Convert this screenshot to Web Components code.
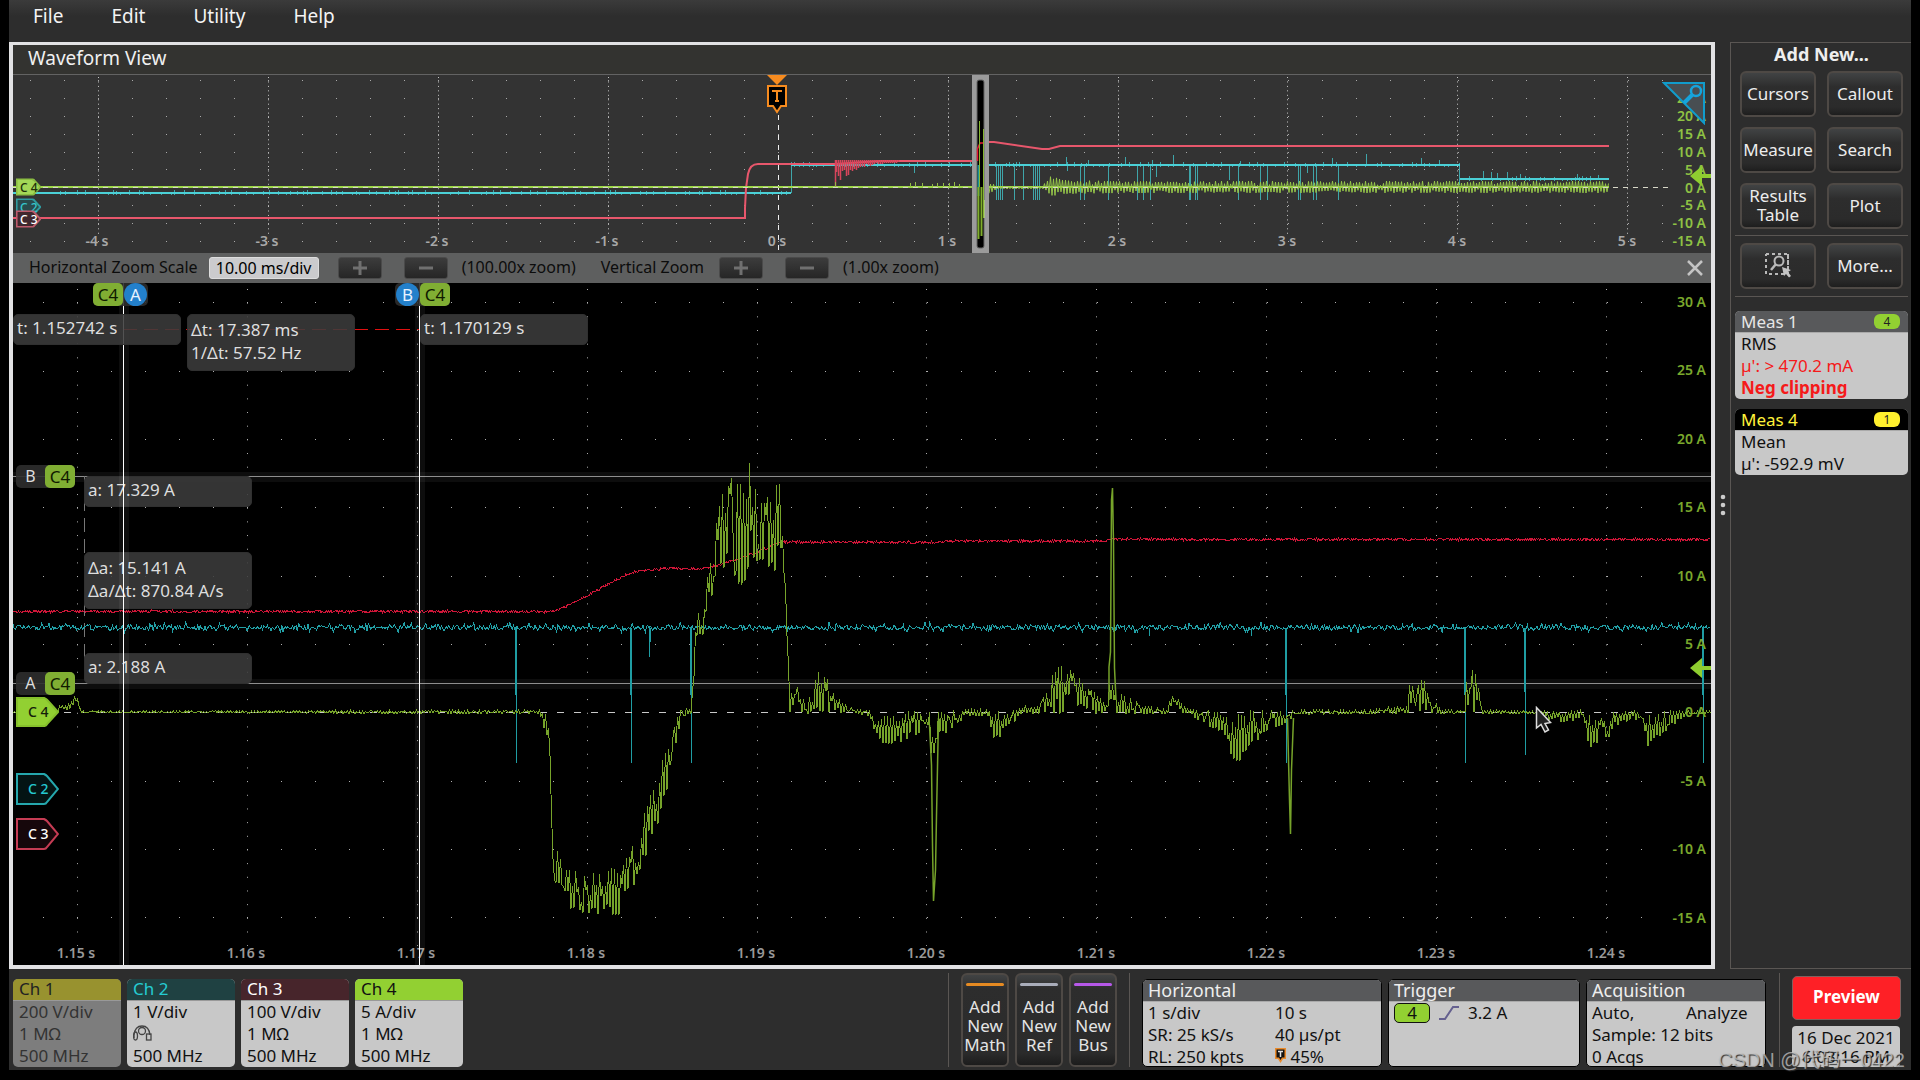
<!DOCTYPE html>
<html lang="en">
<head>
<meta charset="utf-8">
<title>Waveform View</title>
<style>
html,body{margin:0;height:100%;background:#000}
body{font-family:"Noto Sans","Open Sans",sans-serif;color:#e8e8e8;overflow:hidden}
</style>
</head>
<body>
<scope-app></scope-app>
<script>
function element(name, css, html, init) {
  const tpl = document.createElement('template');
  tpl.innerHTML = `<style>:host,*{box-sizing:border-box}${css}</style>${html}`;
  customElements.define(name, class extends HTMLElement {
    connectedCallback() {
      if (this.shadowRoot) return;
      const root = this.attachShadow({ mode: 'open' });
      root.append(tpl.content.cloneNode(true));
      if (init) init.call(this, root);
    }
  });
}

/* deterministic noise, so the traces look the same on every load */
function noise(seed) {
  let s = seed;
  return () => ((s = (s * 1103515245 + 12345) % 2147483648) / 2147483648);
}
/* zig-zag between a low and a high envelope: rows are [x, high, low] */
function envelope(rows, step, seed, depth) {
  const r = noise(seed);
  let d = '', up = false, k = 0;
  for (let x = rows[0][0]; x <= rows[rows.length - 1][0]; x += step) {
    while (rows[k + 1] && rows[k + 1][0] < x) k++;
    const a = rows[k], b = rows[k + 1] || a, t = b[0] > a[0] ? (x - a[0]) / (b[0] - a[0]) : 0;
    const hi = a[1] + (b[1] - a[1]) * t, lo = a[2] + (b[2] - a[2]) * t;
    const f = r() * r() * depth;
    const y = up ? hi + (lo - hi) * f : lo - (lo - hi) * f;
    d += (d ? 'L' : 'M') + x.toFixed(1) + ' ' + y.toFixed(1);
    up = !up;
  }
  return d;
}
function band(points, h) { return points.map(p => [p[0], p[1] - h, p[1] + h]); }
/* put plot annotations on the plot's own coordinate system */
function place(root, x0, y0, w, h) {
  root.querySelectorAll('[data-x]').forEach(e => e.style.left = ((e.dataset.x - x0) / w * 100) + '%');
  root.querySelectorAll('[data-y]').forEach(e => e.style.top = ((e.dataset.y - y0) / h * 100) + '%');
}

element('menu-bar', `
:host{display:block;height:42px;background:linear-gradient(#3b3b3b,#2d2d2d 16px)}
nav{display:flex;gap:48px;padding:2px 24px}
button{font-family:inherit;font-size:19px;line-height:28px;color:#f4f4f4;background:none;border:0;padding:0}`,
`<nav><button>File</button><button>Edit</button><button>Utility</button><button>Help</button></nav>`);

element('channel-tag', `
:host{display:block;position:absolute;width:var(--w,43px);height:var(--h,32px);transform:translateY(-50%)}
svg{position:absolute;inset:0;width:100%;height:100%}
path{fill:var(--fill);stroke:var(--line);stroke-width:2;vector-effect:non-scaling-stroke}
span{position:absolute;inset:0;padding-left:var(--pad,12px);display:flex;align-items:center;font-size:var(--fs,14px);font-weight:500;line-height:16px;color:var(--ink);white-space:pre}`,
`<svg viewBox="0 0 43 32" preserveAspectRatio="none"><path d="M1 1H28Q30 2 31 3L42 16L31 29Q30 31 28 31H1Z"/></svg><span><slot></slot></span>`);

element('source-chip', `
:host{display:flex;align-items:center;position:absolute;height:23px;background:#2e2e2ee6;border-radius:5px;font-size:17px;line-height:23px;color:#ddd}
b{font-weight:400;width:30px;height:23px;text-align:center;background:#80ae33;color:#101a00;border-radius:5px}
i{font-style:normal;text-align:center;width:24px}
:host([round]) i{background:#2380cb;border-radius:50%;width:23px;color:#e8f2ff;margin:0 1px}
:host([before]){flex-direction:row-reverse}
:host([side]) i{width:29px;font-size:16px}`,
`<b>C4</b><i><slot></slot></i>`);

element('read-out', `
:host{display:block;position:absolute;width:168px;border-radius:5px;background:#3b3b3be0;border:1px solid #303030;color:#dedede;font-size:17px;line-height:23px;padding:1px 3px 5px;white-space:pre-line}
:host([two]){padding:3px 3px 6px}`,
`<slot></slot>`);

element('trigger-level', `
:host{display:block;position:absolute;right:0;width:21px;height:20px;transform:translateY(-50%)}
svg{display:block}`,
`<svg width="21" height="20"><path d="M0 10L12 0V8H21V12H12V20Z" fill="#8fce30"/></svg>`);

element('overview-plot', `
:host{display:block;position:relative;height:178px;background:#333;overflow:hidden}
.plot{position:absolute;inset:0;width:100%;height:100%}
.plot path{fill:none;vector-effect:non-scaling-stroke}
.t,.v{position:absolute;font-size:14px;line-height:16px;font-weight:600;color:#a8a8a8;white-space:nowrap}
.t{transform:translate(-50%,-50%)}
.v{right:5px;transform:translateY(-50%);color:#8fc244}
.over{position:absolute;top:0;transform:translateX(-50%)}
.corner{position:absolute;right:5px;top:6px}`,
`<svg class="plot" viewBox="13 75 1698 178" preserveAspectRatio="none"></svg>
<div class="labels"></div>
<svg class="over" data-x="777" width="22" height="40" viewBox="0 0 22 40"><path d="M1 0H21L11 10Z" fill="#f68b1f"/><path d="M2 11H20V31H15L11 37L7 31H2Z" fill="#000" stroke="#f68b1f" stroke-width="2"/><path d="M7 17V16H15V17M11 16V26M9 26H13" fill="none" stroke="#f68b1f" stroke-width="2"/></svg>
<svg class="corner" width="44" height="44" viewBox="0 0 44 44"><path d="M2 2H42V42Z" fill="#484e52" stroke="#119ccc" stroke-width="2"/><circle cx="34" cy="10" r="5" fill="none" stroke="#16a4dc" stroke-width="2.5"/><path d="M30 14L22 22" stroke="#16a4dc" stroke-width="4"/></svg>
<channel-tag data-x="16" data-y="187" style="--w:25px;--h:17px;--fill:#a3d757;--line:#8bbd42;--ink:#20300a;--pad:4px;--fs:12px">C 4</channel-tag>
<channel-tag data-x="16" data-y="207" style="--w:25px;--h:17px;--fill:#2a4a4c;--line:#2f9a9f;--ink:#35c6cc;--pad:4px;--fs:12px">C 2</channel-tag>
<channel-tag data-x="16" data-y="219" style="--w:25px;--h:17px;--fill:#40282e;--line:#bd5a6c;--ink:#fff;--pad:4px;--fs:12px">C 3</channel-tag>
<trigger-level data-y="175.5"></trigger-level>`,
function (root) {
  const p = (d, c, w, x = '') => `<path d="${d}" stroke="${c}" stroke-width="${w}" ${x}/>`;
  let s = '';
  for (const y of [80, 98, 116, 134, 152, 169, 205, 223, 241]) s += p(`M30 ${y}.5H1690`, '#aaa', 1, 'stroke-dasharray="1 33"');
  for (const x of [98, 268, 438, 608, 948, 1118, 1287, 1457, 1627]) s += p(`M${x}.5 77V235`, '#c8c8c8', 1, 'stroke-dasharray="1 3.45"');
  s += p('M778.5 115V250', '#eee', 1, 'stroke-dasharray="5 5"');
  const r = noise(7);
  /* channel 2 */
  let d = '';
  for (const x of [996, 998, 1000, 1002, 1014, 1023, 1033, 1035, 1037, 1039, 1080, 1084, 1108, 1137, 1143, 1150, 1189, 1190, 1195, 1197, 1238, 1260, 1267, 1298, 1300, 1313, 1316, 1338]) d += `M${x}.5 165V200`;
  d += 'M914.5 165V173M1067.5 165V171M1156.5 165V177M1229.5 165V180M1307.5 165V173';
  for (const [x, y] of [[1066,157],[1088,160],[1125,157],[1152,160],[1173,155],[1240,161],[1332,158],[1366,154],[1421,158],[1439,160],[1483,171],[1491,172],[1497,173],[1507,172],[1520,174],[1577,174],[1598,175]]) d += `M${x}.5 ${y}V${y > 165 ? 179 : 165}`;
  s += p(d, '#3fa5a9', 1);
  s += p('M791.5 193V165M1459.5 165V185', '#3fa5a9', 1);
  d = '';
  for (let x = 60; x < 1600; x += 3 + r() * 9) {
    const y = x < 791 ? 193 : x < 1460 ? 165 : 179;
    d += `M${x | 0}.5 ${y - r() * 3 | 0}V${y + 2}`;
  }
  s += p(d, '#3fa5a9', 1);
  s += p('M13 193H791M791 165H1460M1460 179H1609', '#4bd0d6', 2);
  /* channel 3 */
  s += p('M13 218H745V208L746 188L748 174Q750 164 758 164H835L880 161H976M984 142H994L1042 149H1049L1060 146H1080L1110 146H1609', '#e8576c', 2);
  d = 'M835.5 160V186';
  for (let x = 836, a = 24; x < 900; x += 2, a *= .9) d += `M${x}.5 160V${(162 + a * (.4 + .6 * r())).toFixed(0)}`;
  s += p(d, '#d8455c', 1.5);
  /* channel 4 */
  s += p('M13 187H1609', '#9fd84a', 2);
  d = 'M835.5 187V182';
  for (const x of [910, 915, 922, 932, 937, 943, 949, 954, 959]) d += `M${x}.5 187V${182 + (x % 3)}`;
  s += p(d, '#93bd45', 1);
  s += p(envelope([[989, 180, 194], [997, 186, 189], [1042, 186, 189], [1045, 182, 191], [1051, 176, 196], [1064, 180, 194], [1120, 181, 193], [1609, 181, 193]], 1.5, 3, .4), '#98c94a', 1);
  s += p('M13 187.5H1672', '#d8d8c8', 1, 'stroke-dasharray="5 5"');
  s += `<rect x="972" y="75" width="17" height="178" fill="#9b9b9b"/><rect x="977" y="80" width="7" height="168" rx="2" fill="#000" stroke="#666"/>`;
  s += p('M977.5 161V149L980 143H984', '#e21b35', 1.5) + p('M978.5 165V196', '#1c8f94', 2);
  s += p('M978.5 187V239M981.5 187V236', '#7fae2b', 2) + p('M979.5 121V187M983.5 129V218', '#86b832', 1) + p('M984.5 200V218', '#a8c080', 1);
  root.querySelector('.plot').innerHTML = s;
  let l = '';
  [-4, -3, -2, -1, 0, 1, 2, 3, 4, 5].forEach(n => l += `<span class="t" data-x="${777 + n * 170}" data-y="241">${n} s</span>`);
  [25, 20, 15, 10, 5, 0, -5, -10, -15].forEach((n, i) => l += `<span class="v" data-y="${98 + i * 17.9}">${n} A</span>`);
  root.querySelector('.labels').innerHTML = l;
  place(root, 13, 75, 1698, 178);
});

element('zoom-bar', `
:host{display:flex;align-items:center;height:30px;background:#5e5f5f;color:#0c0c0c;font-size:16px;line-height:22px;padding:0 8px 0 16px;white-space:nowrap}
label,span{display:block;padding-bottom:3px}
input{font:inherit;width:110px;height:22px;margin:0 19px 0 11px;padding:0 0 1px;text-align:center;background:#cbcbcd;border:1px solid #ddd;border-radius:3px;color:#000}
button{display:grid;place-items:center;width:44px;height:22px;padding:0;border:1px solid #4a4a4a;border-radius:3px;background:linear-gradient(#3c3c3c,#262626)}
.m{margin:0 14px 0 22px}
.v{margin:0 15px 0 25px}
.x{margin-left:auto;background:none;border:0;width:16px;height:20px}`,
`<label for="hs">Horizontal Zoom Scale</label><input id="hs" value="10.00 ms/div">
<button aria-label="Zoom in horizontally"><svg width="16" height="16"><path d="M8 1V15M1 8H15" stroke="#707070" stroke-width="3"/></svg></button>
<button class="m" aria-label="Zoom out horizontally"><svg width="16" height="16"><path d="M1 8H15" stroke="#707070" stroke-width="3"/></svg></button>
<span>(100.00x zoom)</span><span class="v">Vertical Zoom</span>
<button aria-label="Zoom in vertically"><svg width="16" height="16"><path d="M8 1V15M1 8H15" stroke="#707070" stroke-width="3"/></svg></button>
<button class="m" aria-label="Zoom out vertically"><svg width="16" height="16"><path d="M1 8H15" stroke="#707070" stroke-width="3"/></svg></button>
<span>(1.00x zoom)</span>
<button class="x" aria-label="Close zoom"><svg width="16" height="16"><path d="M1 1L15 15M15 1L1 15" stroke="#c4c4c4" stroke-width="2.5"/></svg></button>`);

element('zoom-plot', `
:host{display:block;position:relative;flex:1;min-height:300px;background:#000;overflow:hidden}
.plot{position:absolute;inset:0;width:100%;height:100%}
.plot path{fill:none;vector-effect:non-scaling-stroke}
.t,.v{position:absolute;font-size:14px;line-height:16px;font-weight:600;color:#999;white-space:nowrap}
.t{transform:translate(-50%,-50%)}
.v{right:5px;transform:translateY(-50%);color:#7aa82c}
.ptr{position:absolute}`,
`<svg class="plot base" viewBox="13 283 1698 682" preserveAspectRatio="none"></svg>
<div class="labels"></div>
<read-out data-x="84" data-y="476">a: 17.329 A</read-out>
<read-out two data-x="84" data-y="552">Δa: 15.141 A
Δa/Δt: 870.84 A/s</read-out>
<read-out data-x="84" data-y="653">a: 2.188 A</read-out>
<svg class="plot lines" viewBox="13 283 1698 682" preserveAspectRatio="none"></svg>
<read-out data-x="13" data-y="314">t: 1.152742 s</read-out>
<read-out two data-x="187" data-y="314">Δt: 17.387 ms
1/Δt: 57.52 Hz</read-out>
<read-out data-x="420" data-y="314">t: 1.170129 s</read-out>
<source-chip round data-x="93" data-y="283">A</source-chip>
<source-chip round before data-x="395" data-y="283">B</source-chip>
<source-chip side before data-x="16" data-y="465">B</source-chip>
<source-chip side before data-x="16" data-y="672">A</source-chip>
<channel-tag data-x="16" data-y="712" style="--h:30px;--fill:#92d032;--line:#86c02c;--ink:#14200a">C 4</channel-tag>
<channel-tag data-x="16" data-y="789" style="--fill:#041414;--line:#25a7ad;--ink:#25c8cf">C 2</channel-tag>
<channel-tag data-x="16" data-y="834" style="--fill:#16070b;--line:#c63c54;--ink:#fff">C 3</channel-tag>
<trigger-level data-y="668"></trigger-level>
<svg class="ptr" data-x="1535" data-y="706" width="18" height="28"><path d="M1.500 1.500V22L6 18.500L10 26L13.500 24L10 17.500L15.500 16.500Z" fill="#222" stroke="#ddd" stroke-width="1.500"/></svg>`,
function (root) {
  const p = (d, c, w, x = '') => `<path d="${d}" stroke="${c}" stroke-width="${w}" ${x}/>`;
  const crisp = 'shape-rendering="crispEdges"';
  let s = '';
  for (const y of [302, 371, 439, 507, 576, 644, 781, 849, 917]) s += p(`M43 ${y}.5H1675`, '#b0b0b0', 1, 'stroke-dasharray="1 33"');
  for (const x of [77, 247, 417, 587, 757, 926, 1096, 1266, 1436, 1606]) s += p(`M${x}.5 289V946`, '#b0b0b0', 1, 'stroke-dasharray="1 12.67"');
  for (const y of [477, 684]) s += `<rect x="13" y="${y - 5}" width="1698" height="10" fill="#0d0d0d"/>`;
  for (const y of [476, 683]) s += p(`M13 ${y}.5H1711`, '#8e8e8e', 1);
  s += p('M84.500 476V683', '#777', 1, 'stroke-dasharray="14 7"');
  const red = [[13,611.5],[552,611.5],[560,609],[587,596],[610,583],[630,573],[640,571],[665,568.5],[700,568.5],[715,566],[735,560],[757,552],[775,544],[782,542],[935,542.5],[945,541],[1105,541],[1112,539],[1200,539.5],[1711,539.5]];
  s += p(envelope(band(red, 1.2), 1.1, 11, 1.2), '#cf1638', 1, crisp);
  s += p(envelope(band([[13, 627.5], [1711, 627.5]], 2), 1.2, 29, 2), '#22a0a6', 1, crisp);
  let d = '';
  for (const x of [516, 631, 691, 1286, 1465, 1703]) d += `M${x - 1}.5 628V695M${x}.5 628V763`;
  d += 'M1524.500 628V692M1525.500 628V755M649.500 628V657M650.500 628V642M1149.500 628V636M1251.500 628V636';
  s += p(d, '#1f9da3', 1);
  const g = [[13,711,713],[56,711,714],[58,706,713],[70,703,711],[74,696,704],[77,695,702],[80,708,713],[82,711,713],[540,710,714],[542,710,724],[547,711,735],[549,728,745],[550,740,760],[551,800,815],[553,840,860],[554,863,911],[556,858,895],[558,843,885],[562,865,885],[563,870,915],[566,866,915],[590,876,915],[595,862,915],[605,885,915],[610,862,915],[618,872,915],[622,868,914],[629,850,900],[636,827,886],[643,818,870],[650,795,852],[657,780,828],[663,758,810],[670,737,775],[676,720,745],[680,708,725],[686,707,714],[691,706,714],[693,680,700],[695,640,660],[697,605,640],[701,614,642],[704,610,632],[706,585,620],[709,560,606],[714,550,602],[717,515,583],[722,496,580],[729,464,575],[735,476,600],[740,470,585],[745,495,585],[749,455,570],[754,495,560],[759,465,570],[764,480,580],[767,448,585],[773,500,570],[779,465,580],[783,520,565],[785,556,585],[787,610,640],[789,682,705],[790,690,713],[800,686,713],[808,696,714],[813,686,714],[817,662,713],[822,675,713],[827,678,712],[835,693,713],[845,704,713],[855,710,714],[870,710,717],[874,710,732],[882,711,744],[898,710,746],[905,711,743],[915,710,738],[928,710,730],[930,712,735],[931,735,755],[936.5,735,755],[938,712,732],[946,711,734],[955,710,726],[968,710,717],[990,710,716],[992,711,743],[997,711,743],[1003,710,732],[1015,710,722],[1021,706,714],[1035,702,714],[1045,692,714],[1053,670,714],[1062,665,714],[1074,670,714],[1085,685,714],[1095,692,714],[1107,698,714],[1109,680,700],[1114,680,700],[1116,690,714],[1120,692,714],[1132,697,714],[1142,702,714],[1152,708,714],[1168,708,714],[1171,693,713],[1180,699,713],[1190,710,714],[1200,710,722],[1215,710,730],[1227,710,738],[1232,711,760],[1242,711,762],[1250,710,750],[1262,710,737],[1275,710,728],[1286,711,724],[1295,710,715],[1370,710,714],[1395,706,714],[1407,704,714],[1410,675,714],[1424,676,714],[1428,688,714],[1436,701,714],[1440,710,714],[1463,709,714],[1466,680,714],[1471,668,714],[1477,676,714],[1481,698,714],[1483,710,714],[1540,711,714],[1548,711,721],[1565,710,722],[1584,710,720],[1587,711,740],[1592,711,754],[1600,710,746],[1612,710,737],[1620,710,724],[1643,710,720],[1648,711,748],[1656,711,740],[1668,710,729],[1682,710,719],[1690,711,714],[1711,711,714]];
  s += p('M13 712.500H1675', '#c8c8c8', 1, 'stroke-dasharray="7 10"');
  s += p(envelope(g, 1.5, 5, .9), '#76a32a', 1, crisp);
  s += p('M929.500 725L931.500 765L932.500 845L933.500 901L935.500 870L936.500 816L938.500 718M1287.500 718L1289.500 800L1290.500 834L1291.500 770L1293.500 718M1109 700V667L1110.500 652L1111.500 500L1112.500 488L1113.500 543L1114.500 668L1116 700', '#76a32a', 1.5);
  s += p('M123 329.500H419', '#e01010', 1, 'stroke-dasharray="14 7"');
  root.querySelector('.base').innerHTML = s;
  root.querySelector('.lines').innerHTML =
    `<rect x="119" y="300" width="10" height="665" fill="#fff" fill-opacity=".05"/><rect x="415" y="300" width="10" height="665" fill="#fff" fill-opacity=".05"/>` +
    p('M123.500 283V965M419.500 283V965', '#fff', 1);
  let l = '';
  for (let i = 0; i < 10; i++) l += `<span class="t" data-x="${76 + i * 170}" data-y="953">${(1.15 + i / 100).toFixed(2)} s</span>`;
  [30, 25, 20, 15, 10, 5, 0, -5, -10, -15].forEach((n, i) => l += `<span class="v" data-y="${302 + i * 68.4}">${n} A</span>`);
  root.querySelector('.labels').innerHTML = l;
  place(root, 13, 283, 1698, 682);
});

element('wave-view', `
:host{display:flex;flex-direction:column;border:4px solid #e2e2e4;border-top-width:3px;min-width:0}
h1{margin:0;height:30px;padding-left:15px;font-size:19px;line-height:26px;font-weight:400;color:#f0f0f0;background:#333330;border-bottom:1px solid #636363}`,
`<h1>Waveform View</h1><overview-plot></overview-plot><zoom-bar></zoom-bar><zoom-plot></zoom-plot>`);

element('scope-button', `
:host{display:block}
button{display:flex;align-items:center;justify-content:center;width:100%;height:46px;padding:0 0 2px;font-family:inherit;font-size:17px;line-height:19px;color:#ececec;border:2px solid #4e4945;border-radius:6px;background:linear-gradient(#414344,#2d2d2d 14px,#2b2b2b 34px,#1e1e1e)}`,
`<button><slot></slot></button>`);

element('meas-badge', `
:host{display:block;border-radius:5px;overflow:hidden;background:#c8c8c8;color:#111;font-size:17px;line-height:22px}
header{display:flex;justify-content:space-between;align-items:center;height:22px;padding:0 8px 0 6px;background:var(--head,#58595b);color:var(--ink,#e6e6e6);border-bottom:1px solid #aaa}
b{width:26px;height:15px;border-radius:6px;background:var(--tag);color:#222;font-weight:400;font-size:12px;line-height:16px;text-align:center}
div{padding-left:6px}`,
`<header><span></span><b></b></header><div><slot></slot></div>`,
function (root) {
  root.querySelector('span').textContent = this.getAttribute('name');
  root.querySelector('b').textContent = this.getAttribute('source');
});

element('side-panel', `
:host{display:block;width:181px;border:1px solid #5a5653;border-right:0;padding:0 3px 0 4px}
h2{margin:0;font-size:18px;line-height:22px;font-weight:700;text-align:center;color:#eee}
.g{display:grid;grid-template-columns:76px 76px;justify-content:center;gap:10px 11px;padding:6px 0}
.h{padding:7px 0;border:solid #5a5653;border-width:1px 0}
meas-badge{margin-top:14px}
meas-badge+meas-badge{margin-top:10px}
p{margin:0}
.e{color:#f51a1a}`,
`<h2>Add New...</h2>
<div class="g"><scope-button>Cursors</scope-button><scope-button>Callout</scope-button><scope-button>Measure</scope-button><scope-button>Search</scope-button><scope-button>Results<br>Table</scope-button><scope-button>Plot</scope-button></div>
<div class="g h"><scope-button><svg width="28" height="26" viewBox="0 0 28 26"><path d="M2 2H24V20M24 2V22H2V2" fill="none" stroke="#b9b9b9" stroke-width="2" stroke-dasharray="3 3"/><circle cx="15" cy="9" r="4.500" fill="#2d2d2d" stroke="#b9b9b9" stroke-width="2"/><path d="M12 12L7 18" stroke="#b9b9b9" stroke-width="2.500"/><path d="M18 15L27 18L24 20L27 24L25 25.500L22 22L20 24Z" fill="#c4c4c4"/></svg></scope-button><scope-button>More...</scope-button></div>
<meas-badge name="Meas 1" source="4" style="--tag:#92d032"><p>RMS</p><p class="e">µ': &gt; 470.2 mA</p><p class="e"><strong>Neg clipping</strong></p></meas-badge>
<meas-badge name="Meas 4" source="1" style="--tag:#fff02e;--head:#000;--ink:#fff23a"><p>Mean</p><p>µ': -592.9 mV</p></meas-badge>`);

element('grip-dots', `:host{display:block;width:15px;padding-top:452px}svg{display:block;margin:0 auto}`,
`<svg width="6" height="24"><g fill="#ccc"><circle cx="3" cy="3" r="2.300"/><circle cx="3" cy="11" r="2.300"/><circle cx="3" cy="19" r="2.300"/></g></svg>`);

element('channel-badge', `
:host{display:block;width:108px;height:88px;border-radius:5px;overflow:hidden;background:#c8c8c8;color:#111;font-size:17px;line-height:22px}
:host([off]){background:#7d7d7d;color:#333}
header{height:22px;line-height:20px;padding-left:6px;background:var(--head);color:var(--ink);border-bottom:1px solid #999}
p{margin:0;padding-left:6px;height:22px}
svg{display:block}`,
`<header></header><p></p><p></p><p></p>`,
function (root) {
  root.querySelector('header').textContent = this.getAttribute('name');
  const p = root.querySelectorAll('p');
  p[0].textContent = this.getAttribute('scale');
  p[2].textContent = '500 MHz';
  if (this.hasAttribute('probe'))
    p[1].innerHTML = '<svg width="19" height="20" viewBox="0 0 19 20"><g fill="none" stroke="#444" stroke-width="1.300"><path d="M1 15V12Q2 3 9 3Q16 3 17 12"/><circle cx="9" cy="8" r="3.500"/><ellipse cx="2.500" cy="13" rx="2" ry="4"/><rect x="13.500" y="11" width="4.500" height="6"/></g></svg>';
  else p[1].textContent = '1 MΩ';
});

element('add-trace', `
:host{display:block}
button{width:48px;height:94px;padding:8px 0 0;font-family:inherit;font-size:17px;line-height:19px;color:#e4e4e4;border:2px solid #4e4945;border-radius:6px;background:linear-gradient(#414344,#2d2d2d 14px,#2b2b2b 78px,#1c1c1c);display:flex;flex-direction:column;align-items:center}
i{width:38px;height:3px;border-radius:2px;background:var(--bar);margin-bottom:11px}`,
`<button><i></i><span><slot></slot></span></button>`);

element('info-badge', `
:host{display:block;height:88px;border:1px solid #000;border-radius:5px;overflow:hidden;background:#c8c8c8;color:#111;font-size:17px;line-height:22px}
header{height:22px;line-height:20px;padding-left:5px;background:#58595b;color:#eee;font-size:18px;border-bottom:1px solid #aaa}
div{padding-left:5px}`,
`<header></header><div><slot></slot></div>`,
function (root) { root.querySelector('header').textContent = this.getAttribute('name'); });

element('settings-bar', `
:host{display:flex;padding:0 10px 3px 4px;height:101px;align-items:flex-end;white-space:nowrap}
.ch{display:flex;gap:6px;margin-right:auto}
.add{display:flex;gap:6px;height:94px;padding:0 12px;border:solid #5a5653;border-width:0 1px;margin-right:12px}
info-badge{margin-right:6px}
.r{display:flex;height:22px}
.r>span:first-child{width:127px}
.trg{display:flex;align-items:center;gap:9px}
.trg b{width:36px;height:20px;line-height:18px;border:1px solid #111;border-radius:5px;background:#92d032;text-align:center;font-weight:400}
.run{width:122px;margin-left:7px;border-left:1px solid #5a5653;height:94px;padding:3px 0 0 12px;display:flex;flex-direction:column;gap:6px}
.run button{width:109px;height:44px;padding:0 0 2px;background:#fe2026;color:#fff;border:1px solid #80605e;border-radius:5px;font:700 17px/20px "Noto Sans",sans-serif}
time{display:block;width:108px;height:42px;padding-top:2px;border-radius:4px;background:#c8c8c8;color:#111;text-align:center;font-size:17px;line-height:19px}`,
`<div class="ch">
<channel-badge off name="Ch 1" scale="200 V/div" style="--head:#98922f;--ink:#222"></channel-badge>
<channel-badge probe name="Ch 2" scale="1 V/div" style="--head:#1f4142;--ink:#25ccd3"></channel-badge>
<channel-badge name="Ch 3" scale="100 V/div" style="--head:#47252b;--ink:#fff"></channel-badge>
<channel-badge name="Ch 4" scale="5 A/div" style="--head:#92d032;--ink:#111"></channel-badge></div>
<div class="add"><add-trace style="--bar:#e58a22">Add<br>New<br>Math</add-trace><add-trace style="--bar:#a9adba">Add<br>New<br>Ref</add-trace><add-trace style="--bar:#b658e8">Add<br>New<br>Bus</add-trace></div>
<info-badge name="Horizontal" style="width:240px"><div class="r"><span>1 s/div</span><span>10 s</span></div><div class="r"><span>SR: 25 kS/s</span><span>40 µs/pt</span></div><div class="r"><span>RL: 250 kpts</span><span><svg width="11" height="15" viewBox="0 0 11 15"><path d="M0 0H11V11H8L5.500 15L3 11H0Z" fill="#e98a2b"/><path d="M1.500 1.500H9.500V9.500H7L5.500 12L4 9.500H1.500Z" fill="#111"/><path d="M3 3.500H8M5.500 3V9" stroke="#ddd" stroke-width="1.500"/></svg> 45%</span></div></info-badge>
<info-badge name="Trigger" style="width:192px"><div class="trg"><b>4</b><svg width="20" height="14"><path d="M0 13H6L14 1H20" fill="none" stroke="#65608f" stroke-width="2"/></svg><span>3.2 A</span></div></info-badge>
<info-badge name="Acquisition" style="width:180px"><div class="r"><span style="width:94px">Auto,</span><span>Analyze</span></div><div class="r">Sample: 12 bits</div><div class="r">0 Acqs</div></info-badge>
<div class="run"><button>Preview</button><time>16 Dec 2021<br>6:03:16 PM</time></div>`);

element('scope-app', `
:host{display:flex;flex-direction:column;height:100vh;padding:0 9px 10px;background:#000;position:relative}
settings-bar{background:#2d2d2d}
.body{display:flex;flex:1;min-height:0;background:#2d2d2d}
wave-view{flex:1}
.mark{position:absolute;right:15px;bottom:6px;font:20px/28px "Liberation Sans","Noto Sans CJK SC",sans-serif;color:#c9c9c9b8;text-shadow:1px 1px 1px #333}`,
`<menu-bar></menu-bar><div class="body"><wave-view></wave-view><grip-dots></grip-dots><side-panel></side-panel></div><settings-bar></settings-bar><div class="mark">CSDN @代码一0422</div>`);
</script>
</body>
</html>
